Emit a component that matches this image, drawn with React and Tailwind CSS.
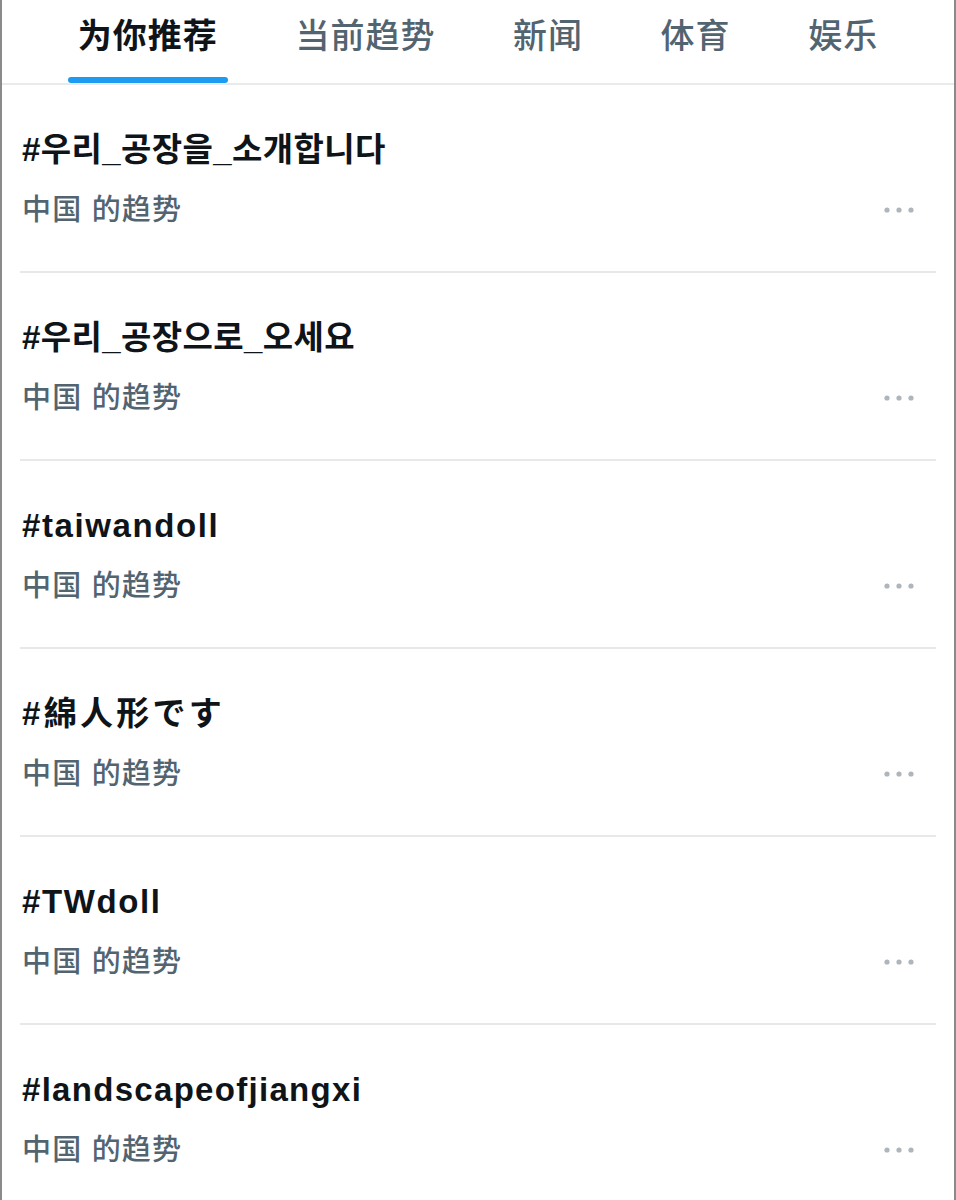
import React, { useState } from 'react';

const tabs = ['为你推荐', '当前趋势', '新闻', '体育', '娱乐'];

const trends = [
  { id: 1, tag: '#우리_공장을_소개합니다', cls: 'tracking-[0.4px]' },
  { id: 2, tag: '#우리_공장으로_오세요', cls: 'tracking-[0.4px]' },
  { id: 3, tag: '#taiwandoll', cls: 'tracking-[1.6px]' },
  { id: 4, tag: '#綿人形です', cls: 'tracking-[3.3px]' },
  { id: 5, tag: '#TWdoll', cls: 'tracking-[1.6px]' },
  { id: 6, tag: '#landscapeofjiangxi', cls: 'tracking-[1.3px]' },
];

const font = { fontFamily: '"Liberation Sans", "Noto Sans CJK SC", sans-serif' };

const MoreDots = () => (
  <svg width="30" height="6" viewBox="0 0 30 6" className="shrink-0">
    <circle cx="3" cy="3" r="2.6" fill="#aeb5bb" />
    <circle cx="15" cy="3" r="2.6" fill="#aeb5bb" />
    <circle cx="27" cy="3" r="2.6" fill="#aeb5bb" />
  </svg>
);

const TrendRow = ({ trend, last }) => (
  <div className="px-[18px]">
    <div className={`pl-[2px] pr-[22px] pt-[45px] pb-[41px] ${last ? '' : 'border-b-2 border-[#e6e8ea]'}`}>
      <div className={`h-[40px] leading-[40px] text-[33px] font-bold text-[#0f1419] whitespace-nowrap ${trend.cls}`}>
        {trend.tag}
      </div>
      <div className="mt-[20px] h-[40px] flex items-center justify-between">
        <span className="text-[29px] leading-[40px] text-[#536471] tracking-[1.2px] font-medium">中国 的趋势</span>
        <MoreDots />
      </div>
    </div>
  </div>
);

export default function App() {
  const [active, setActive] = useState(0);

  return (
    <div className="w-[956px] h-[1200px] overflow-hidden bg-white border-x-2 border-[#8a8a8a]" style={font}>
      {/* Tabs */}
      <div className="flex px-[37px] border-b-2 border-[#e8eaeb]">
        {tabs.map((tab, i) => (
          <button
            key={tab}
            onClick={() => setActive(i)}
            className="flex-auto h-[83px] flex items-start justify-center"
          >
            <span
              className={`relative h-[83px] pt-[16px] leading-[40px] text-[34px] tracking-[1px] ${
                i === active ? 'font-bold text-[#0f1419]' : 'font-medium text-[#536471]'
              }`}
            >
              {tab}
              {i === active && (
                <span className="absolute left-[-10px] right-[-10px] bottom-0 h-[6px] rounded-full bg-[#1d9bf0]" />
              )}
            </span>
          </button>
        ))}
      </div>

      {/* Trends list */}
      {trends.map((t, i) => (
        <TrendRow key={t.id} trend={t} last={i === trends.length - 1} />
      ))}
    </div>
  );
}
